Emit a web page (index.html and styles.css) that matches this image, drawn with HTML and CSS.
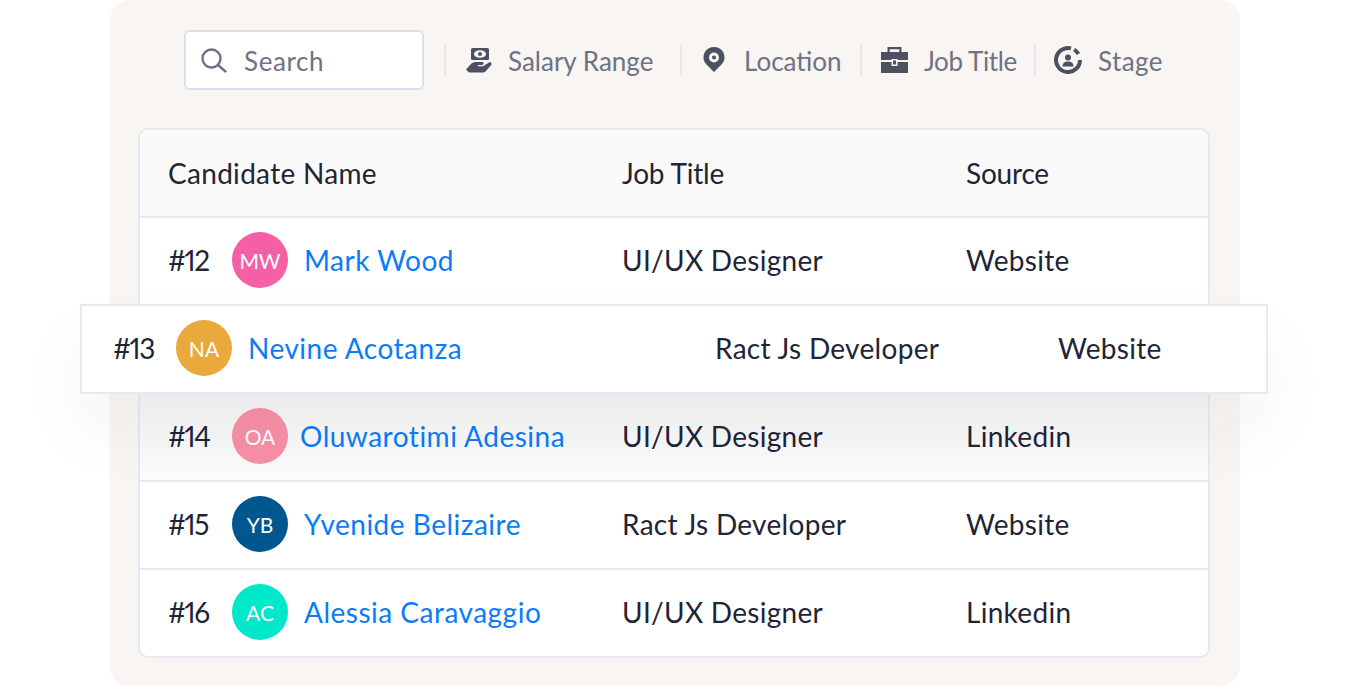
FILE: index.html
```html
<!DOCTYPE html>
<html lang="en">
<head>
    <meta charset="UTF-8">
    <title>Candidates</title>
    <link rel="stylesheet" href="styles.css">
</head>
<body>
    <div class="panel">
        <div class="filters">
            <div class="search">
                <svg width="28" height="28" viewBox="0 0 28 28"><circle cx="11.500" cy="12.500" r="9" fill="none" stroke="#6e7284" stroke-width="2.400"/><path d="M18 19l7.500 6.500" stroke="#6e7284" stroke-width="2.400" stroke-linecap="round"/></svg>
                <span>Search</span>
            </div>
            <div class="filter filter-salary">
                <svg width="26" height="26" viewBox="0 0 26 26"><rect x="5" y="1" width="18" height="12" rx="1.500" fill="#4c5060"/><ellipse cx="14" cy="7" rx="6" ry="3.800" fill="#f8f5f2"/><circle cx="14" cy="7" r="2" fill="#4c5060"/><path fill="#4c5060" d="M0 22.500l5-5.500c1.500-1.500 3.500-2 6-2h5.500c1.500 0 1.500 3-.5 3h-4v1.200h5l6-3.700c1.500-.8 3.500.8 2.200 2.500L20 24c-1 1-2 1.500-3.500 1.500H3z"/></svg>
                <span>Salary Range</span>
            </div>
            <div class="filter filter-location">
                <svg width="22" height="26" viewBox="0 0 22 26"><path fill="#4c5060" fill-rule="evenodd" d="M11 0c6 0 10.500 4.500 10.500 10.500 0 4-2.500 6.500-4.500 8.500l-6 6-6-6c-2-2-4.500-4.500-4.500-8.500C.5 4.500 5 0 11 0zm0 5.500a5 5 0 1 0 0 10 5 5 0 0 0 0-10z"/><circle cx="11" cy="10.500" r="2" fill="#4c5060"/></svg>
                <span>Location</span>
            </div>
            <div class="filter filter-job">
                <svg width="27" height="26" viewBox="0 0 27 26"><path fill="none" stroke="#4c5060" stroke-width="2.200" d="M7.600 6V1.100h11.800V6"/><path fill="#4c5060" d="M0 5h27v8H16.500v-1h-6v1H0zM0 15h10.500v4h6v-4H27v11H0z"/><rect x="12" y="13.500" width="3" height="4" fill="#4c5060"/></svg>
                <span>Job Title</span>
            </div>
            <div class="filter filter-stage">
                <svg width="28" height="28" viewBox="0 0 28 28"><path fill="none" stroke="#4c5060" stroke-width="4" d="M17 2.400A12 12 0 1 0 26 14"/><path fill="none" stroke="#4c5060" stroke-width="4" d="M20.100 3.600A12 12 0 0 1 24.400 8"/><circle cx="14" cy="11.500" r="3" fill="#4c5060"/><path fill="#4c5060" d="M8.500 20.500c0-3.500 2-5 5.500-5s5.500 1.500 5.500 5z"/></svg>
                <span>Stage</span>
            </div>
        </div>
        <div class="table">
            <div class="row row-head">
                <div class="col-name">Candidate Name</div>
                <div class="col-job">Job Title</div>
                <div class="col-source">Source</div>
            </div>
            <div class="row">
                <div class="col-name"><span class="num">#12</span><span class="avatar avatar-mw">MW</span><a class="name">Mark Wood</a></div>
                <div class="col-job">UI/UX Designer</div>
                <div class="col-source">Website</div>
            </div>
            <div class="row row-spacer"></div>
            <div class="row row-shaded">
                <div class="col-name"><span class="num">#14</span><span class="avatar avatar-oa">OA</span><a class="name">Oluwarotimi Adesina</a></div>
                <div class="col-job">UI/UX Designer</div>
                <div class="col-source">Linkedin</div>
            </div>
            <div class="row">
                <div class="col-name"><span class="num">#15</span><span class="avatar avatar-yb">YB</span><a class="name">Yvenide Belizaire</a></div>
                <div class="col-job">Ract Js Developer</div>
                <div class="col-source">Website</div>
            </div>
            <div class="row row-last">
                <div class="col-name"><span class="num">#16</span><span class="avatar avatar-ac">AC</span><a class="name">Alessia Caravaggio</a></div>
                <div class="col-job">UI/UX Designer</div>
                <div class="col-source">Linkedin</div>
            </div>
        </div>
        <div class="row-float">
            <div class="float-name"><span class="num">#13</span><span class="avatar avatar-na">NA</span><a class="name">Nevine Acotanza</a></div>
            <div class="float-job">Ract Js Developer</div>
            <div class="float-source">Website</div>
        </div>
    </div>
</body>
</html>
```

FILE: styles.css
```css
html, body {
    height: 100%;
}
body {
    margin: 0;
    font-family: 'Lato', 'Liberation Sans', sans-serif;
    background-color: #fff;
    color: #1f2437;
    overflow: hidden;
}
.panel {
    position: relative;
    width: 1130px;
    height: 686px;
    margin-left: 110px;
    box-sizing: border-box;
    padding: 30px 30px 0 28px;
    background-color: #f8f5f2;
    border-radius: 20px;
}
.filters {
    display: flex;
    align-items: center;
    height: 60px;
    margin-left: 46px;
    color: #6e7284;
    font-size: 26px;
}
.filters span {
    padding-top: 2px;
}
.search {
    display: flex;
    align-items: center;
    gap: 16px;
    width: 240px;
    height: 60px;
    box-sizing: border-box;
    padding-left: 14px;
    background-color: #fff;
    border: 2px solid #dcdfeb;
    border-radius: 6px;
}
.search span {
    letter-spacing: 0.6px;
}
.filter {
    display: flex;
    align-items: center;
    gap: 16px;
    height: 32px;
    border-left: 2px solid #e6e9f1;
}
.filter-salary { margin-left: 20px; padding-left: 20px; width: 214px; }
.filter-location { padding-left: 21px; gap: 19px; width: 157px; }
.filter-job { padding-left: 19px; width: 153px; letter-spacing: -0.4px; }
.filter-stage { padding-left: 18px; letter-spacing: 0.4px; }
.table {
    margin-top: 38px;
    background-color: #fff;
    border: 2px solid #e6e9f1;
    border-radius: 10px;
    overflow: hidden;
    font-size: 28px;
    letter-spacing: 0.3px;
}
.row {
    display: flex;
    align-items: center;
    height: 84px;
    padding: 0 0 2px 28px;
    border-bottom: 2px solid #e6e9f1;
}
.row-head {
    height: 86px;
    padding-bottom: 0;
    background-color: #fafafa;
}
.row-head .col-job,
.row-head .col-source {
    letter-spacing: -0.2px;
}
.row-spacer {
    height: 86px;
    padding-bottom: 0;
}
.row-shaded {
    background: linear-gradient(#f4f4f5, #fcfcfc);
}
.row-last {
    border-bottom: 0;
}
.col-name {
    display: flex;
    align-items: center;
    width: 454px;
}
.col-job {
    width: 344px;
}
.num {
    width: 64px;
    font-variant-numeric: proportional-nums;
    letter-spacing: -1.5px;
}
.avatar {
    display: flex;
    align-items: center;
    justify-content: center;
    flex: none;
    width: 56px;
    height: 56px;
    margin-right: 16px;
    border-radius: 50%;
    color: #fff;
    font-size: 21px;
    letter-spacing: 0;
}
.avatar-mw { background-color: #f55fa6; }
.avatar-na { background-color: #e9a93b; }
.avatar-oa { background-color: #f78fa7; margin-right: 12px; }
.avatar-yb { background-color: #00568f; }
.avatar-ac { background-color: #00e8ca; }
.name {
    color: #0a7cf7;
    letter-spacing: 0.5px;
}
.row-float {
    position: absolute;
    left: -30px;
    top: 304px;
    display: flex;
    align-items: center;
    width: 1188px;
    height: 90px;
    box-sizing: border-box;
    padding: 0 0 2px 31px;
    background-color: #fff;
    border: 2px solid #e6e9f1;
    box-shadow: 0 36px 70px rgba(30, 35, 50, 0.05);
    font-size: 28px;
    letter-spacing: 0.3px;
}
.row-float .num { width: 63px; }
.float-name {
    display: flex;
    align-items: center;
    width: 602px;
}
.float-job {
    width: 343px;
}
```
